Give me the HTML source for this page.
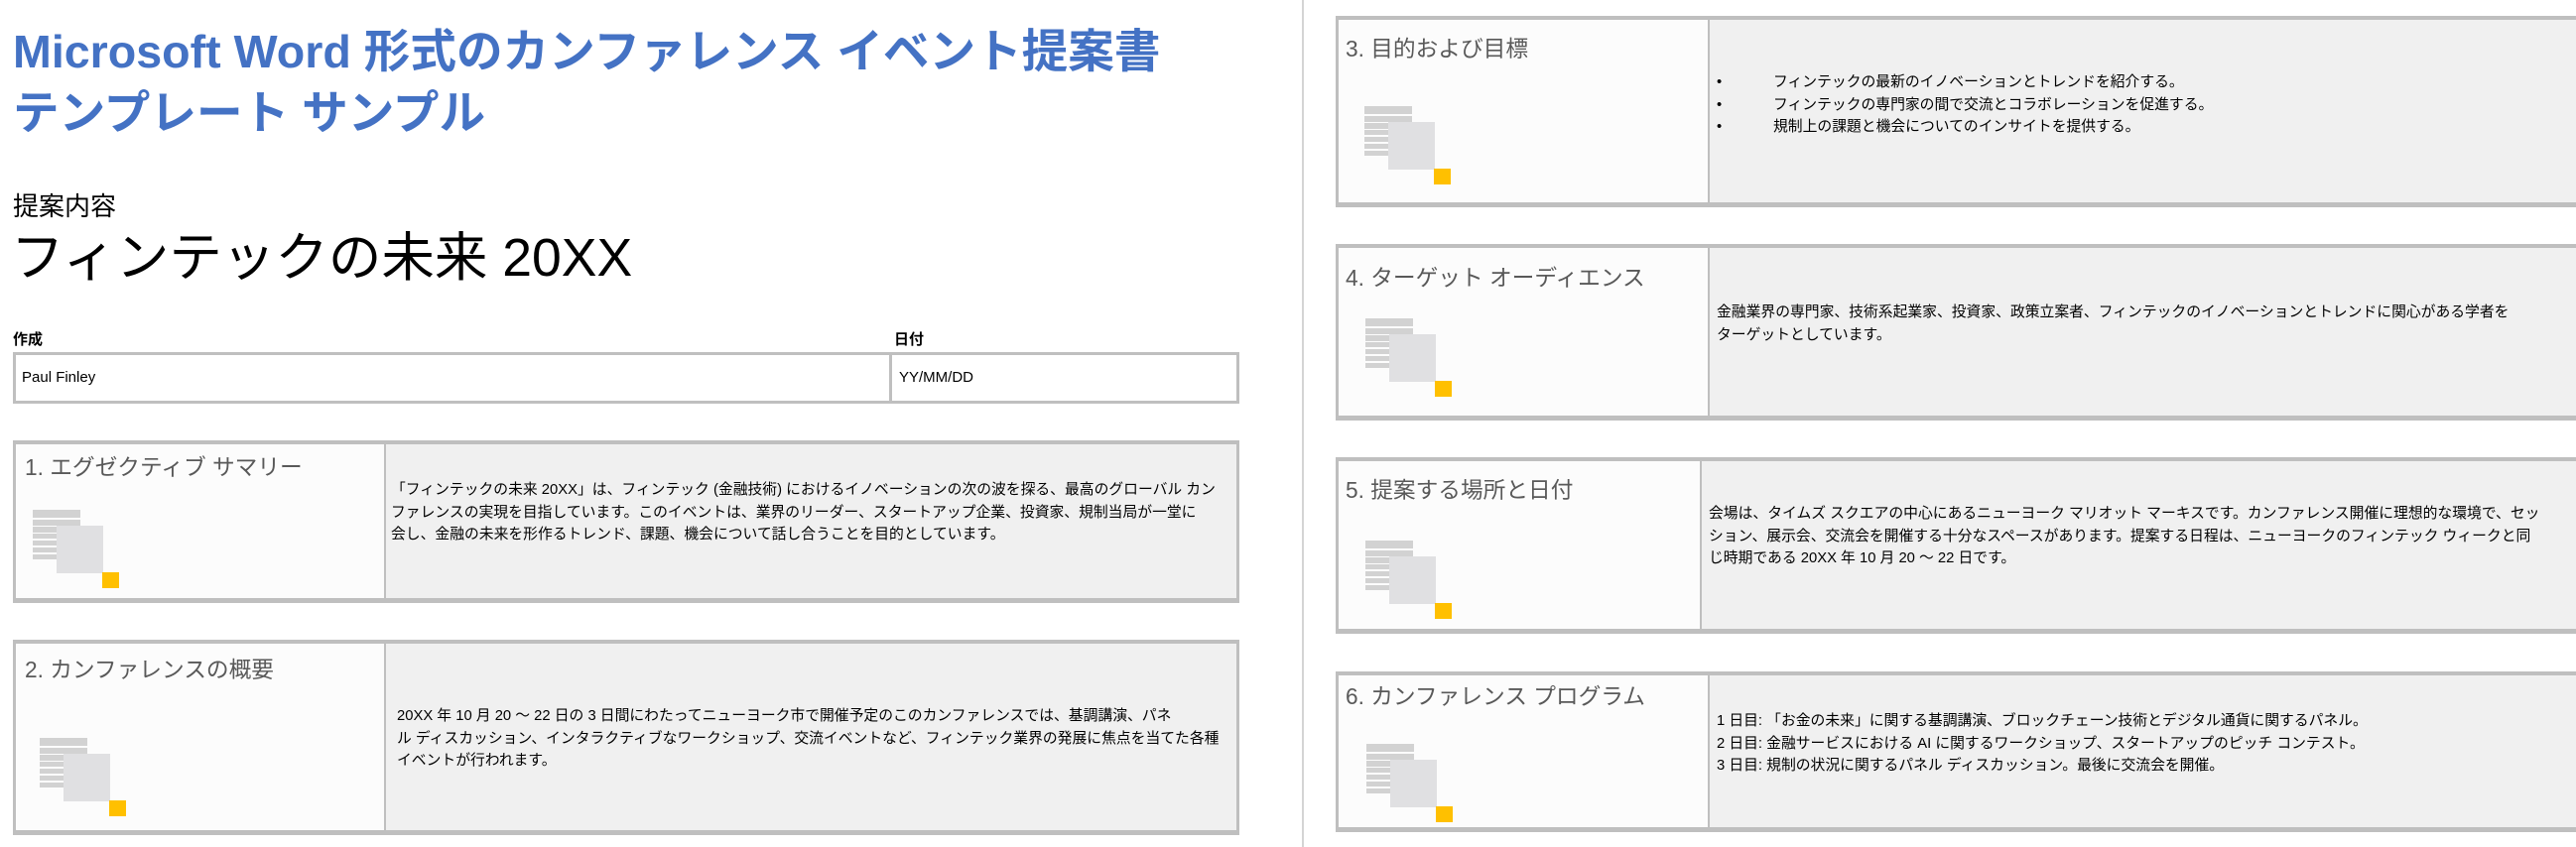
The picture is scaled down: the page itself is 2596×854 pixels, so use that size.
<!DOCTYPE html>
<html><head><meta charset="utf-8"><style>
*{margin:0;padding:0;box-sizing:border-box}
body{width:2596px;height:854px;background:#fff;position:relative;overflow:hidden;font-family:"Liberation Sans","Noto Sans CJK JP",sans-serif;color:#000}
.a{position:absolute;white-space:nowrap}
.title{color:#4472C4;font-weight:bold;font-size:46.6px;line-height:60px}
.box{position:absolute;border:3px solid #bfbfbf;border-top-width:4px;border-bottom-width:5px;background:#f0f0f0}
.box .l{position:absolute;left:0;top:0;bottom:0;background:#fcfcfc;border-right:2px solid #bfbfbf}
.h{position:absolute;font-size:22.7px;color:#595959;white-space:nowrap}
.t{position:absolute;font-size:14.8px;line-height:22.5px;white-space:nowrap}
.ic{position:absolute;width:90px;height:80px}
.ic .s{position:absolute;left:0;width:48px;background:#d2d2d2}
.ic .r{position:absolute;left:24px;top:16px;width:47px;height:48px;background:#e0e0e2}
.ic .y{position:absolute;left:70px;top:63px;width:17px;height:16px;background:#FFC000}
</style></head><body>
<div class="a title" style="left:13px;top:22px">Microsoft Word 形式のカンファレンス イベント提案書</div>
<div class="a title" style="left:13px;top:84px">テンプレート サンプル</div>
<div class="a" style="left:13px;top:188px;font-size:26px">提案内容</div>
<div class="a" style="left:11px;top:229px;font-size:53.5px;line-height:64px">フィンテックの未来 20XX</div>
<div class="a" style="left:13px;top:331px;font-size:15px;font-weight:bold">作成</div>
<div class="a" style="left:901px;top:331px;font-size:15px;font-weight:bold">日付</div>
<div style="position:absolute;left:13px;top:355px;width:1236px;height:52px;border:3px solid #bfbfbf"></div>
<div style="position:absolute;left:896px;top:355px;width:3px;height:52px;background:#bfbfbf"></div>
<div class="a" style="left:22px;top:372px;font-size:15px">Paul Finley</div>
<div class="a" style="left:906px;top:372px;font-size:15px">YY/MM/DD</div>

<div style="position:absolute;left:1312px;top:0;width:2px;height:854px;background:#d4d4d4"></div>

<div class="box" style="left:13px;top:444px;width:1236px;height:164px"><div class="l" style="width:373px"></div></div>
<div class="h" style="left:25px;top:453px">1. エグゼクティブ サマリー</div>
<div class="ic" style="left:33px;top:514px"><div class="s" style="top:0;height:8px"></div><div class="s" style="top:10px;height:6px"></div><div class="s" style="top:17px;height:6px"></div><div class="s" style="top:24px;height:5px"></div><div class="s" style="top:31px;height:5px"></div><div class="s" style="top:38px;height:5px"></div><div class="s" style="top:45px;height:5px"></div><div class="r"></div><div class="y"></div></div>
<div class="t" style="left:394px;top:483px">「フィンテックの未来 20XX」は、フィンテック (金融技術) におけるイノベーションの次の波を探る、最高のグローバル カン<br>ファレンスの実現を目指しています。このイベントは、業界のリーダー、スタートアップ企業、投資家、規制当局が一堂に<br>会し、金融の未来を形作るトレンド、課題、機会について話し合うことを目的としています。</div>

<div class="box" style="left:13px;top:645px;width:1236px;height:197px"><div class="l" style="width:373px"></div></div>
<div class="h" style="left:25px;top:657px">2. カンファレンスの概要</div>
<div class="ic" style="left:40px;top:744px"><div class="s" style="top:0;height:8px"></div><div class="s" style="top:10px;height:6px"></div><div class="s" style="top:17px;height:6px"></div><div class="s" style="top:24px;height:5px"></div><div class="s" style="top:31px;height:5px"></div><div class="s" style="top:38px;height:5px"></div><div class="s" style="top:45px;height:5px"></div><div class="r"></div><div class="y"></div></div>
<div class="t" style="left:400px;top:711px">20XX 年 10 月 20 ～ 22 日の 3 日間にわたってニューヨーク市で開催予定のこのカンファレンスでは、基調講演、パネ<br>ル ディスカッション、インタラクティブなワークショップ、交流イベントなど、フィンテック業界の発展に焦点を当てた各種<br>イベントが行われます。</div>

<div class="box" style="left:1346px;top:16px;width:1260px;height:193px"><div class="l" style="width:374px"></div></div>
<div class="h" style="left:1356px;top:31px">3. 目的および目標</div>
<div class="ic" style="left:1375px;top:107px"><div class="s" style="top:0;height:8px"></div><div class="s" style="top:10px;height:6px"></div><div class="s" style="top:17px;height:6px"></div><div class="s" style="top:24px;height:5px"></div><div class="s" style="top:31px;height:5px"></div><div class="s" style="top:38px;height:5px"></div><div class="s" style="top:45px;height:5px"></div><div class="r"></div><div class="y"></div></div>
<div class="t" style="left:1730px;top:72px">•<br>•<br>•</div>
<div class="t" style="left:1787px;top:72px">フィンテックの最新のイノベーションとトレンドを紹介する。<br>フィンテックの専門家の間で交流とコラボレーションを促進する。<br>規制上の課題と機会についてのインサイトを提供する。</div>

<div class="box" style="left:1346px;top:246px;width:1260px;height:178px"><div class="l" style="width:374px"></div></div>
<div class="h" style="left:1356px;top:262px">4. ターゲット オーディエンス</div>
<div class="ic" style="left:1376px;top:321px"><div class="s" style="top:0;height:8px"></div><div class="s" style="top:10px;height:6px"></div><div class="s" style="top:17px;height:6px"></div><div class="s" style="top:24px;height:5px"></div><div class="s" style="top:31px;height:5px"></div><div class="s" style="top:38px;height:5px"></div><div class="s" style="top:45px;height:5px"></div><div class="r"></div><div class="y"></div></div>
<div class="t" style="left:1730px;top:304px">金融業界の専門家、技術系起業家、投資家、政策立案者、フィンテックのイノベーションとトレンドに関心がある学者を<br>ターゲットとしています。</div>

<div class="box" style="left:1346px;top:461px;width:1260px;height:178px"><div class="l" style="width:366px"></div></div>
<div class="h" style="left:1356px;top:476px">5. 提案する場所と日付</div>
<div class="ic" style="left:1376px;top:545px"><div class="s" style="top:0;height:8px"></div><div class="s" style="top:10px;height:6px"></div><div class="s" style="top:17px;height:6px"></div><div class="s" style="top:24px;height:5px"></div><div class="s" style="top:31px;height:5px"></div><div class="s" style="top:38px;height:5px"></div><div class="s" style="top:45px;height:5px"></div><div class="r"></div><div class="y"></div></div>
<div class="t" style="left:1722px;top:507px">会場は、タイムズ スクエアの中心にあるニューヨーク マリオット マーキスです。カンファレンス開催に理想的な環境で、セッ<br>ション、展示会、交流会を開催する十分なスペースがあります。提案する日程は、ニューヨークのフィンテック ウィークと同<br>じ時期である 20XX 年 10 月 20 ～ 22 日です。</div>

<div class="box" style="left:1346px;top:677px;width:1260px;height:162px"><div class="l" style="width:374px"></div></div>
<div class="h" style="left:1356px;top:684px">6. カンファレンス プログラム</div>
<div class="ic" style="left:1377px;top:750px"><div class="s" style="top:0;height:8px"></div><div class="s" style="top:10px;height:6px"></div><div class="s" style="top:17px;height:6px"></div><div class="s" style="top:24px;height:5px"></div><div class="s" style="top:31px;height:5px"></div><div class="s" style="top:38px;height:5px"></div><div class="s" style="top:45px;height:5px"></div><div class="r"></div><div class="y"></div></div>
<div class="t" style="left:1730px;top:716px">1 日目: 「お金の未来」に関する基調講演、ブロックチェーン技術とデジタル通貨に関するパネル。<br>2 日目: 金融サービスにおける AI に関するワークショップ、スタートアップのピッチ コンテスト。<br>3 日目: 規制の状況に関するパネル ディスカッション。最後に交流会を開催。</div>
</body></html>
